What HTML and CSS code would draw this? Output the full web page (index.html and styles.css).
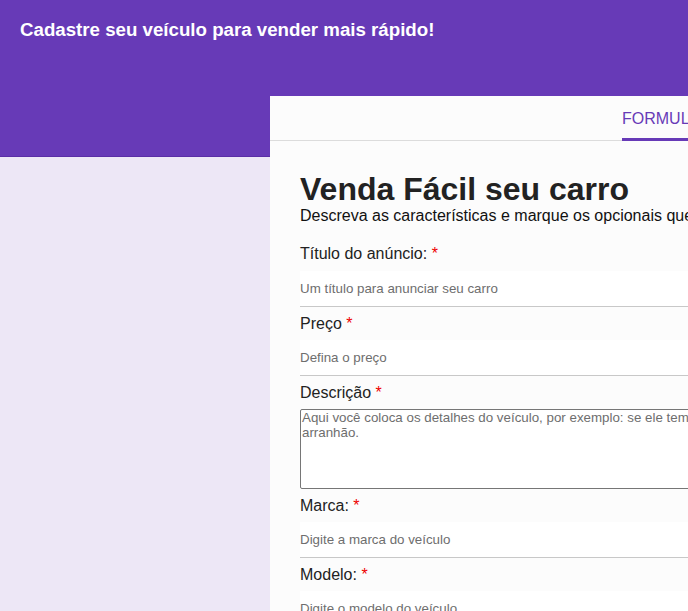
FILE: index.html
```html
<!DOCTYPE html>
<html lang="pt-BR">
<head>
<meta charset="utf-8">
<title>Venda Fácil</title>
<link rel="stylesheet" href="styles.css">
</head>
<body>
<header class="topbar">
  <h1 class="topbar-title">Cadastre seu veículo para vender mais rápido!</h1>
</header>
<main class="page">
  <section class="card">
    <nav class="tabs">
      <span class="tab active">FORMULÁRIO</span>
    </nav>
    <div class="card-body">
      <h2 class="form-title">Venda Fácil seu carro</h2>
      <p class="form-sub">Descreva as características e marque os opcionais que o seu carro possui.</p>
      <form class="fields">
        <label class="field-label">Título do anúncio: <span class="req">*</span></label>
        <input class="field-input" type="text" placeholder="Um título para anunciar seu carro">
        <label class="field-label">Preço <span class="req">*</span></label>
        <input class="field-input" type="text" placeholder="Defina o preço">
        <label class="field-label">Descrição <span class="req">*</span></label>
        <textarea class="field-area" placeholder="Aqui você coloca os detalhes do veículo, por exemplo: se ele tem algum detalhe de pintura, amassado ou arranhão."></textarea>
        <label class="field-label">Marca: <span class="req">*</span></label>
        <input class="field-input" type="text" placeholder="Digite a marca do veículo">
        <label class="field-label">Modelo: <span class="req">*</span></label>
        <input class="field-input" type="text" placeholder="Digite o modelo do veículo">
      </form>
    </div>
  </section>
</main>
</body>
</html>
```
FILE: styles.css
```css
html, body {
  margin: 0;
  padding: 0;
}
body {
  font-family: "Liberation Sans", Arial, sans-serif;
  background: #ede7f6;
  overflow: hidden;
  width: 688px;
  height: 611px;
}
.topbar {
  background: #673ab7;
  height: 157px;
  border-bottom: 1px solid #5a2ea6;
  padding: 19px 20px 0;
  box-sizing: border-box;
}
.topbar-title {
  margin: 0;
  color: #fff;
  font-size: 18.7px;
  font-weight: bold;
  line-height: 21px;
}
.page {
  margin-top: -61px;
  padding-left: 270px;
}
.card {
  width: 720px;
  background: #fcfcfc;
  min-height: 560px;
}
.tabs {
  height: 44px;
  border-bottom: 1px solid #dcdcdc;
  display: flex;
  padding-left: 352px;
}
.tab {
  display: flex;
  align-items: center;
  height: 39px;
  padding-top: 3px;
  font-size: 16px;
  line-height: 18px;
  color: #673ab7;
  border-bottom: 3px solid #673ab7;
  margin-bottom: -1px;
}
.card-body {
  padding: 31px 30px 0;
}
.form-title {
  margin: 0;
  font-size: 32px;
  line-height: 35px;
  font-weight: bold;
  color: #222;
}
.form-sub {
  margin: 0;
  font-size: 16px;
  line-height: 18px;
  color: #111;
  white-space: nowrap;
}
.fields {
  margin-top: 12px;
  display: flex;
  flex-direction: column;
}
.field-label {
  display: block;
  height: 33px;
  box-sizing: border-box;
  padding-top: 8px;
  font-size: 16px;
  line-height: 18px;
  color: #222;
}
.field-label:first-child {
  height: 34px;
}
.req {
  color: #e00;
}
.field-input {
  display: block;
  width: 100%;
  height: 36px;
  box-sizing: border-box;
  margin: 0;
  padding: 0;
  border: none;
  border-bottom: 1px solid #c8c8c8;
  background: #fff;
  font-family: "Liberation Sans", Arial, sans-serif;
  font-size: 13.333px;
  color: #333;
  outline: none;
}
.field-input::placeholder,
.field-area::placeholder {
  color: #6e6e6e;
}
.field-area {
  display: block;
  width: 100%;
  height: 80px;
  box-sizing: border-box;
  margin: 0;
  padding: 0 1px;
  border: 1px solid #767676;
  border-radius: 2px;
  background: #fff;
  font-family: "Liberation Sans", Arial, sans-serif;
  font-size: 13.333px;
  line-height: 15px;
  resize: none;
  outline: none;
}
```
